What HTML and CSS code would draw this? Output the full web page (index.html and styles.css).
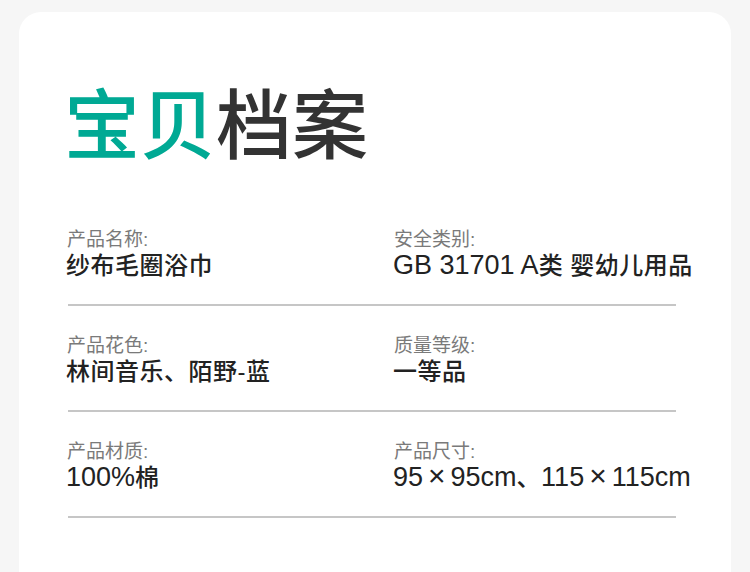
FILE: index.html
```html
<!DOCTYPE html>
<html>

<head>
    <meta charset="UTF-8">
    <title>宝贝档案</title>
    <link rel="stylesheet" href="styles.css">
</head>

<body>
    <!-- 卡片 -->
    <div class="card">
        <h1 class="title"><span class="accent">宝贝</span>档案</h1>

        <!-- 参数列表 -->
        <div class="row">
            <div class="cell">
                <p class="label">产品名称:</p>
                <p class="value">纱布毛圈浴巾</p>
            </div>
            <div class="cell">
                <p class="label">安全类别:</p>
                <p class="value"><span class="num">GB 31701 A</span>类 婴幼儿用品</p>
            </div>
        </div>
        <div class="row">
            <div class="cell">
                <p class="label">产品花色:</p>
                <p class="value">林间音乐、陌野-蓝</p>
            </div>
            <div class="cell">
                <p class="label">质量等级:</p>
                <p class="value">一等品</p>
            </div>
        </div>
        <div class="row">
            <div class="cell">
                <p class="label">产品材质:</p>
                <p class="value"><span class="num">100%</span>棉</p>
            </div>
            <div class="cell">
                <p class="label">产品尺寸:</p>
                <p class="value"><span class="num">95<span class="times">×</span>95cm</span>、<span class="num">115<span class="times">×</span>115cm</span></p>
            </div>
        </div>
    </div>
</body>

</html>
```

FILE: styles.css
```css
* {
    box-sizing: border-box;
}

body {
    margin: 0;
    background-color: #f6f6f6;
    font-family: "Liberation Sans", "Noto Sans CJK SC", sans-serif;
}

.card {
    margin: 12px 19px 0;
    min-height: 560px;
    padding: 70px 55px 40px 49px;
    background-color: #ffffff;
    border-radius: 22px 22px 0 0;
}

.title {
    margin: 0 0 42px -4px;
    font-family: "Noto Sans CJK SC", sans-serif;
    font-size: 76px;
    font-weight: 500;
    line-height: 76px;
    color: #333333;
}

.accent {
    color: #00a994;
}

.row {
    display: grid;
    grid-template-columns: 327px 1fr;
    padding: 29px 0 23px;
    border-bottom: 2px solid #c6c6c6;
}

.label,
.value {
    margin: 0;
    white-space: nowrap;
}

.label {
    margin-left: -1px;
    font-size: 19px;
    line-height: 22px;
    color: #7a7a7a;
}

.value {
    height: 30px;
    margin-left: -2px;
    font-size: 24px;
    font-weight: 500;
    line-height: 30px;
    letter-spacing: 0.5px;
    color: #222222;
}

.num {
    font-size: 27px;
    line-height: 20px;
    letter-spacing: 0;
}

.times {
    margin: 0 5px;
    font-size: 30px;
}
```
